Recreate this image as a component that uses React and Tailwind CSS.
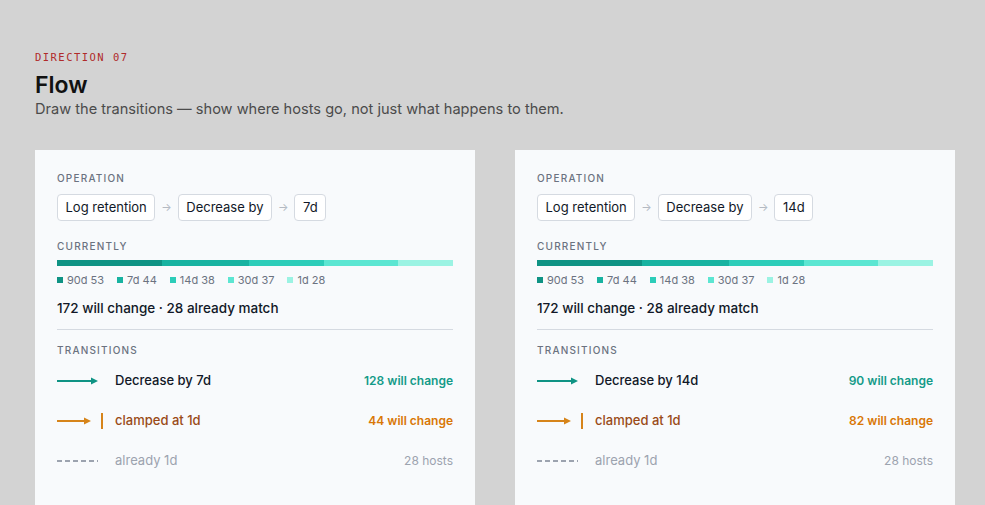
import React from 'react';

const segments = [
  { label: '90d', count: 53, bar: 'bg-[#0f9384]' },
  { label: '7d', count: 44, bar: 'bg-[#18b3a1]' },
  { label: '14d', count: 38, bar: 'bg-[#2ccdb9]' },
  { label: '30d', count: 37, bar: 'bg-[#5ce6d2]' },
  { label: '1d', count: 28, bar: 'bg-[#9bf3e3]' },
];

const total = segments.reduce((sum, s) => sum + s.count, 0);

function Chip({ children }) {
  return (
    <span className="inline-flex h-[27px] items-center rounded-[4px] border border-[#d5dae1] bg-white px-[7.5px] text-[13px] text-[#111827]">
      {children}
    </span>
  );
}

function Label({ children }) {
  return (
    <div className="text-[10px] font-medium uppercase leading-[14px] tracking-[0.12em] text-[#6b7280]">{children}</div>
  );
}

function SolidArrow({ color }) {
  return (
    <svg width="42" height="10" viewBox="0 0 42 10">
      <line x1="0" y1="5" x2="36" y2="5" stroke={color} strokeWidth="2" />
      <path d="M34 1.5 L41 5 L34 8.5 Z" fill={color} />
    </svg>
  );
}

function ClampArrow({ color }) {
  return (
    <svg width="48" height="18" viewBox="0 0 48 18">
      <line x1="0" y1="9" x2="28" y2="9" stroke={color} strokeWidth="2" />
      <path d="M27 5.5 L34 9 L27 12.5 Z" fill={color} />
      <line x1="45" y1="1" x2="45" y2="17" stroke={color} strokeWidth="2" />
    </svg>
  );
}

function DashedLine() {
  return (
    <svg width="42" height="10" viewBox="0 0 42 10">
      <line x1="0" y1="5" x2="41" y2="5" stroke="#9ca3af" strokeWidth="2" strokeDasharray="5 3" />
    </svg>
  );
}

function FlowCard({ amount, direct, clamped }) {
  return (
    <div className="h-[380px] w-[440px] shrink-0 bg-[#f8fafc] px-[22px] pt-[21px]">
      <Label>Operation</Label>
      <div className="mt-[9px] flex items-center">
        <Chip>Log retention</Chip>
        <span className="mx-[6px] text-[11px] text-[#b3b9c2]">→</span>
        <Chip>Decrease by</Chip>
        <span className="mx-[6px] text-[11px] text-[#b3b9c2]">→</span>
        <Chip>{amount}</Chip>
      </div>

      <div className="mt-[18px]">
        <Label>Currently</Label>
      </div>
      <div className="mt-[7px] flex h-[6px] w-full">
        {segments.map((s) => (
          <div key={s.label} className={s.bar} style={{ width: `${(s.count / total) * 100}%` }} />
        ))}
      </div>
      <div className="mt-[6px] flex items-center gap-[13px] text-[11px] text-[#6b7280]">
        {segments.map((s) => (
          <span key={s.label} className="flex items-center gap-[4px]">
            <span className={`h-[6px] w-[6px] ${s.bar}`} />
            {s.label} {s.count}
          </span>
        ))}
      </div>

      <div className="mt-[9px] text-[13.5px] font-medium text-[#111827]">
        172 will change · 28 already match
      </div>

      <div className="mt-[11px] border-t border-[#d5dae1]" />

      <div className="mt-[13px]">
        <Label>Transitions</Label>
      </div>

      <div className="mt-[4px] flex flex-col">
        <div className="flex h-[40px] items-center">
          <div className="w-[58px]">
            <SolidArrow color="#0f9384" />
          </div>
          <span className="text-[13px] font-medium text-[#111827]">Decrease by {amount}</span>
          <span className="ml-auto text-[12px] font-semibold text-[#149a88]">{direct} will change</span>
        </div>
        <div className="flex h-[40px] items-center">
          <div className="w-[58px]">
            <ClampArrow color="#d6841a" />
          </div>
          <span className="text-[13px] font-medium text-[#9a4b17]">clamped at 1d</span>
          <span className="ml-auto text-[12px] font-semibold text-[#d97706]">{clamped} will change</span>
        </div>
        <div className="flex h-[40px] items-center">
          <div className="w-[58px]">
            <DashedLine />
          </div>
          <span className="text-[13px] text-[#9ca3af]">already 1d</span>
          <span className="ml-auto text-[12px] text-[#9ca3af]">28 hosts</span>
        </div>
      </div>
    </div>
  );
}

export default function App() {
  return (
    <div
      className="h-[505px] w-[985px] overflow-hidden bg-[#d3d3d3] px-[35px] pt-[50px]"
      style={{ fontFamily: 'Inter, "Noto Sans", sans-serif' }}
    >
      <div
        className="text-[10.5px] leading-[15px] tracking-[0.14em] text-[#b02a2a]"
        style={{ fontFamily: '"DejaVu Sans Mono", "Liberation Mono", monospace' }}
      >
        DIRECTION 07
      </div>
      <h1 className="mt-[6px] text-[23px] font-semibold leading-[28px] text-[#111111]">Flow</h1>
      <p className="text-[14.6px] leading-[20px] text-[#4b4b4b]">
        Draw the transitions — show where hosts go, not just what happens to them.
      </p>

      <div className="mt-[31px] flex gap-[40px]">
        <FlowCard amount="7d" direct={128} clamped={44} />
        <FlowCard amount="14d" direct={90} clamped={82} />
      </div>
    </div>
  );
}
